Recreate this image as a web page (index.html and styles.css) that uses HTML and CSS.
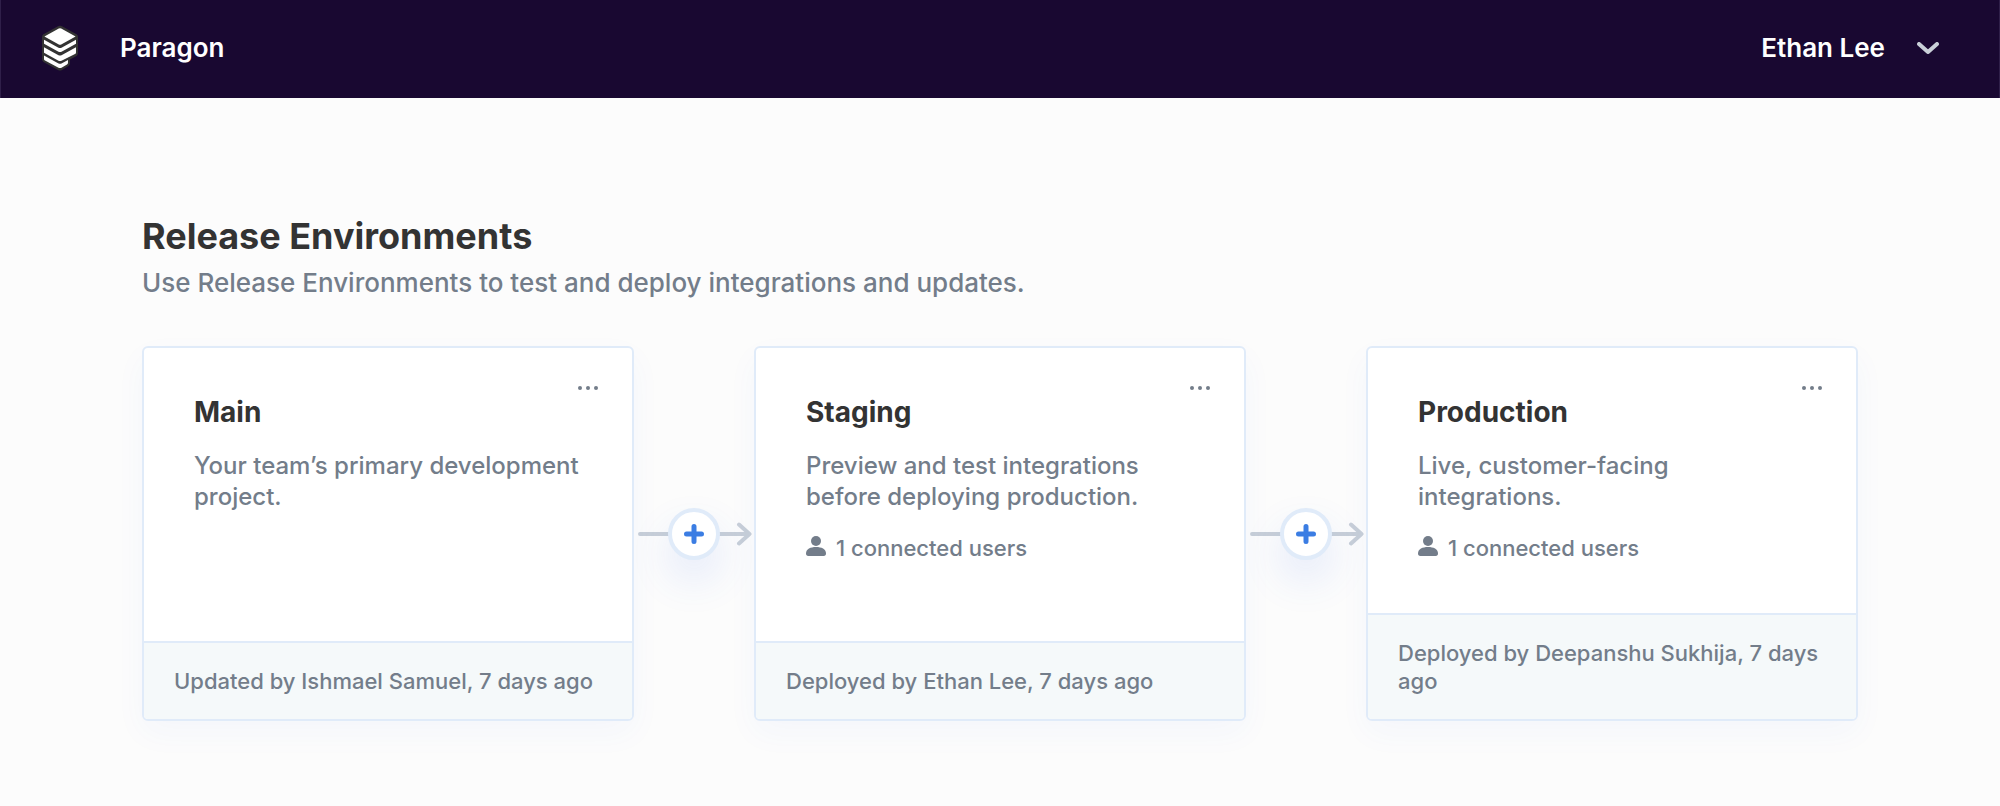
FILE: index.html
```html
<!DOCTYPE html>
<html lang="en">
<head>
<meta charset="utf-8">
<meta name="viewport" content="width=device-width, initial-scale=1">
<title>Paragon – Release Environments</title>
<link rel="stylesheet" href="styles.css">
</head>
<body>
<svg class="sprite" aria-hidden="true">
  <symbol id="dots" viewBox="0 0 20 4"><circle cx="2" cy="2" r="2"/><circle cx="10" cy="2" r="2"/><circle cx="18" cy="2" r="2"/></symbol>
  <symbol id="user" viewBox="0 0 20 20"><circle cx="10" cy="5" r="5"/><path d="M0 17.500C0 13 4.500 11 10 11s10 2 10 6.500c0 1.500-.8 2.500-2.300 2.500H2.300C.8 20 0 19 0 17.500Z"/></symbol>
  <symbol id="arrow" viewBox="0 0 116 24"><path d="M4 12H113M103 2.500L113.500 12L103 21.500" fill="none" stroke="currentColor" stroke-width="4" stroke-linecap="round" stroke-linejoin="round"/></symbol>
  <symbol id="plus" viewBox="0 0 20 20"><path d="M10 2.500v15M2.500 10h15" fill="none" stroke="currentColor" stroke-width="5" stroke-linecap="round"/></symbol>
</svg>
<header class="topbar">
  <a class="brand" href="#">
    <svg class="logo" viewBox="0 0 36 46" aria-hidden="true">
      <path class="logo-base" d="M15.500 1.400Q18 .2 20.500 1.400L34.500 9.200Q36 10 36 12V28Q36 30 34.500 31L28 34.500V38Q28 40 26.500 41L20 45Q18 46 16 45L1.500 37Q0 36 0 34V12Q0 10 1.500 9.200Z"/>
      <path class="logo-face" d="M16.800 3.500Q18 2.800 19.200 3.500L33.600 11.500L19.200 19.500Q18 20.200 16.800 19.500L2.400 11.500Z"/>
      <path class="logo-face" d="M2 14.700L16.500 22.700Q18 23.500 19.500 22.700L34 14.700V18.700L19.500 26.700Q18 27.500 16.500 26.700L2 18.700Z"/>
      <path class="logo-face" d="M2 22.200L16.500 30.200Q18 31 19.500 30.200L34 22.200V27.500Q34 28.500 33 29L19.500 35.700Q18 36.500 16.500 35.700L2 27.700Z"/>
      <path class="logo-face" d="M2 30.500L16.500 38.500Q18 39.200 19.500 38.500L26 35V37.500Q26 39 25 39.500L19.500 42.700Q18 43.500 16.500 42.700L3 35.500Q2 35 2 34Z"/>
    </svg>
    <span>Paragon</span>
  </a>
  <button class="account" type="button">
    <span>Ethan Lee</span>
    <svg class="chevron" viewBox="0 0 22 12" aria-hidden="true"><path d="M2 2l9 8l9-8" fill="none" stroke="currentColor" stroke-width="4" stroke-linecap="round" stroke-linejoin="round"/></svg>
  </button>
</header>
<main class="page">
  <h1 class="page-title">Release Environments</h1>
  <p class="page-lead">Use Release Environments to test and deploy integrations and updates.</p>
  <div class="pipeline">
    <article class="card">
      <div class="card-body">
        <button class="more" type="button" aria-label="Main options"><svg class="dots"><use href="#dots"/></svg></button>
        <h2 class="card-title">Main</h2>
        <p class="card-text">Your team’s primary development project.</p>
      </div>
      <footer class="card-footer">Updated by Ishmael Samuel, 7 days ago</footer>
    </article>
    <div class="connector">
      <svg class="arrow" aria-hidden="true"><use href="#arrow"/></svg>
      <button class="add" type="button" aria-label="Add environment after Main"><svg class="plus"><use href="#plus"/></svg></button>
    </div>
    <article class="card">
      <div class="card-body">
        <button class="more" type="button" aria-label="Staging options"><svg class="dots"><use href="#dots"/></svg></button>
        <h2 class="card-title">Staging</h2>
        <p class="card-text">Preview and test integrations before deploying production.</p>
        <p class="users"><svg class="user" aria-hidden="true"><use href="#user"/></svg>1 connected users</p>
      </div>
      <footer class="card-footer">Deployed by Ethan Lee, 7 days ago</footer>
    </article>
    <div class="connector">
      <svg class="arrow" aria-hidden="true"><use href="#arrow"/></svg>
      <button class="add" type="button" aria-label="Add environment after Staging"><svg class="plus"><use href="#plus"/></svg></button>
    </div>
    <article class="card">
      <div class="card-body">
        <button class="more" type="button" aria-label="Production options"><svg class="dots"><use href="#dots"/></svg></button>
        <h2 class="card-title">Production</h2>
        <p class="card-text">Live, customer-facing integrations.</p>
        <p class="users"><svg class="user" aria-hidden="true"><use href="#user"/></svg>1 connected users</p>
      </div>
      <footer class="card-footer">Deployed by Deepanshu Sukhija, 7 days ago</footer>
    </article>
  </div>
</main>
</body>
</html>
```
FILE: styles.css
```css
* { box-sizing: border-box; }

body {
  margin: 0;
  background: #fcfcfc;
  color: #333;
  font-family: Inter, "Liberation Sans", sans-serif;
}

h1, h2, p { margin: 0; }

button {
  padding: 0;
  border: 0;
  background: none;
  color: inherit;
  font: inherit;
  cursor: pointer;
}

svg { display: block; }
.sprite { position: absolute; width: 0; height: 0; }

.topbar {
  display: flex;
  align-items: center;
  justify-content: space-between;
  padding: 25px 60px 27px 41px;
  border: solid #2f1f49;
  border-width: 0 1px;
  background: #190831;
  color: #fff;
  font-size: 26px;
  font-weight: 600;
  line-height: 32px;
}

.brand {
  display: flex;
  align-items: center;
  gap: 42px;
  color: inherit;
  text-decoration: none;
}

.logo { width: 36px; height: 46px; }
.logo-base { fill: #333; }
.logo-face { fill: #fff; }

.account { display: flex; align-items: center; gap: 32px; }
.chevron { width: 22px; height: 12px; color: #c9d0d8; }

.page { padding: 116px 142px 60px; }

.page-title {
  font-size: 36px;
  font-weight: 700;
  line-height: 44px;
}

.page-lead {
  margin-top: 9px;
  color: #737d8a;
  font-size: 26px;
  font-weight: 500;
  line-height: 32px;
}

.pipeline { display: flex; margin-top: 47px; }

.card {
  position: relative;
  display: flex;
  flex: 1 1 0;
  flex-direction: column;
  min-width: 0;
  border: 2px solid #e0ebf9;
  border-radius: 6px;
  background: #fff;
  box-shadow: 0 12px 32px rgba(60, 100, 220, 0.04);
}

.card-body { flex: 1; padding: 47px 50px 51px; }

.more {
  position: absolute;
  top: 30px;
  right: 26px;
  padding: 8px;
  color: #737d8a;
}

.dots { width: 20px; height: 4px; fill: currentColor; }

.card-title {
  font-size: 28px;
  font-weight: 700;
  line-height: 34px;
}

.card-text {
  margin-top: 21px;
  color: #737d8a;
  font-size: 24px;
  font-weight: 500;
  line-height: 31px;
}

.users {
  display: flex;
  align-items: center;
  gap: 10px;
  margin-top: 22px;
  color: #737d8a;
  font-size: 22px;
  font-weight: 500;
  line-height: 28px;
}

.user { width: 20px; height: 20px; margin-bottom: 4px; fill: currentColor; }

.card-footer {
  padding: 24px 30px;
  border-top: 2px solid #e0ebf9;
  border-radius: 0 0 4px 4px;
  background: #f5f9fa;
  color: #737d8a;
  font-size: 22px;
  font-weight: 500;
  line-height: 28px;
}

.connector {
  display: grid;
  flex: none;
  place-items: center;
  width: 120px;
}

.arrow, .add { grid-area: 1 / 1; }
.arrow { width: 116px; height: 24px; color: #c8cfd8; }

.add {
  display: grid;
  place-items: center;
  width: 52px;
  height: 52px;
  border: 4px solid #e0ebf9;
  border-radius: 50%;
  background: #fff;
  box-shadow: 0 20px 40px rgba(60, 110, 230, 0.13);
  color: #3b7de3;
}

.plus { width: 20px; height: 20px; }
```
